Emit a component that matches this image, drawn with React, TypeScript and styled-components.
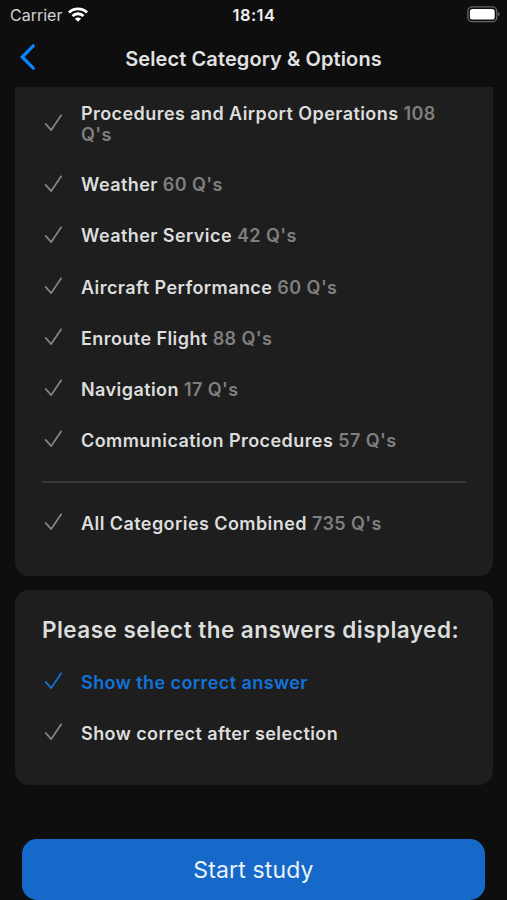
import React from 'react';
import styled, { createGlobalStyle } from 'styled-components';

const GlobalStyle = createGlobalStyle`
  * { box-sizing: border-box; }
  body { margin: 0; background: #0e0e0e; overflow: hidden; }
`;

const Screen = styled.main`
  width: 507px;
  height: 900px;
  display: flex;
  flex-direction: column;
  overflow: hidden;
  background: #0e0e0e;
  color: #dcdddd;
  font-family: Inter, sans-serif;
`;

const StatusBar = styled.div`
  height: 30px;
  flex: none;
  display: grid;
  grid-template-columns: 1fr auto 1fr;
  align-items: center;
  padding: 0 7px 0 10px;
`;

const Carrier = styled.div`
  display: flex;
  align-items: center;
  gap: 6px;
  font-size: 16px;
  letter-spacing: 0;
  color: #d2d2d2;
  svg { margin-top: -2px; }
`;

const Clock = styled.div`
  font-size: 16.5px;
  font-weight: 600;
  letter-spacing: 0.4px;
  margin-right: 2px;
  color: #f0f0f0;
`;

const Battery = styled.svg`
  justify-self: end;
  margin-top: -2px;
`;

const Header = styled.header`
  height: 57px;
  flex: none;
  display: grid;
  grid-template-columns: 48px 1fr 48px;
  align-items: center;
`;

const BackButton = styled.button`
  display: flex;
  padding: 0 0 4px 18px;
  border: 0;
  background: none;
`;

const Title = styled.h1`
  margin: 0;
  text-align: center;
  font-size: 20px;
  line-height: 24px;
  font-weight: 600;
  letter-spacing: 0.1px;
  color: #e2e2e2;
`;

const Card = styled.section<{ $continued?: boolean }>`
  flex: none;
  height: ${(p) => (p.$continued ? 489 : 195)}px;
  margin: 0 14px 14px 15px;
  padding: 0 27px;
  border-radius: ${(p) => (p.$continued ? '0 0 14px 14px' : '14px')};
  background: #1e1e1e;
`;

const CardTitle = styled.h2`
  margin: 0;
  padding: 26px 0 13px;
  font-size: 22.5px;
  line-height: 28px;
  font-weight: 600;
  letter-spacing: 0.46px;
  white-space: nowrap;
`;

const Option = styled.div<{ $selected?: boolean; $tall?: boolean }>`
  height: ${(p) => (p.$tall ? 72.6 : 51.1)}px;
  display: flex;
  align-items: center;
  padding-left: 2px;
  padding-top: ${(p) => (p.$tall ? 1.6 : 0)}px;
  color: ${(p) => (p.$selected ? '#1273d8' : '#dcdddd')};
`;

const CheckIcon = styled.svg<{ $selected?: boolean }>`
  flex: none;
  width: 20px;
  height: 20px;
  margin: -3px 17px 0 0;
  fill: none;
  stroke: ${(p) => (p.$selected ? '#1273d8' : '#858585')};
  stroke-width: 1.7;
  stroke-linecap: round;
  stroke-linejoin: round;
`;

const Label = styled.span`
  width: 370px;
  font-size: 18px;
  line-height: 21.5px;
  font-weight: 600;
  letter-spacing: 0.43px;
`;

const Count = styled.span`
  color: #7f7f80;
`;

const Divider = styled.hr`
  height: 2px;
  margin: 14.6px 0 15.7px;
  border: 0;
  background: #363636;
`;

const StartButton = styled.button`
  flex: none;
  height: 61px;
  margin: 40px 22px 0;
  padding: 0;
  border: 0;
  border-radius: 15px;
  background: #1669c9;
  color: #eaf2fb;
  font-family: inherit;
  font-size: 23px;
  line-height: 28px;
  letter-spacing: 0.15px;
`;

const categories = [
  { name: 'Procedures and Airport Operations', count: 108 },
  { name: 'Weather', count: 60 },
  { name: 'Weather Service', count: 42 },
  { name: 'Aircraft Performance', count: 60 },
  { name: 'Enroute Flight', count: 88 },
  { name: 'Navigation', count: 17 },
  { name: 'Communication Procedures', count: 57 },
];

function Check({ selected }: { selected?: boolean }) {
  return (
    <CheckIcon $selected={selected} viewBox="0 0 20 20">
      <path d="M1.6 10.9 7.2 17.1 17.2 2.3" />
    </CheckIcon>
  );
}

function Category({ name, count, tall }: { name: string; count: number; tall?: boolean }) {
  return (
    <Option $tall={tall}>
      <Check />
      <Label>
        {name} <Count>{count} Q's</Count>
      </Label>
    </Option>
  );
}

export default function App() {
  return (
    <Screen>
      <GlobalStyle />
      <StatusBar>
        <Carrier>
          Carrier
          <svg width="20" height="15" viewBox="0 0 20 15" fill="none" stroke="#fff" strokeWidth="2.8">
            <path d="M1 5.5a12.8 12.8 0 0 1 18 0" />
            <path d="M4.5 9a7.9 7.9 0 0 1 11 0" />
            <path d="M10 14.8 6.9 11.7a4.4 4.4 0 0 1 6.2 0Z" fill="#fff" stroke="none" />
          </svg>
        </Carrier>
        <Clock>18:14</Clock>
        <Battery width="33" height="17" viewBox="0 0 33 17">
          <rect x="0.9" y="0.9" width="28.8" height="14.8" rx="4.3" fill="none" stroke="#666" strokeWidth="1.3" />
          <rect x="2.9" y="3.1" width="24.8" height="10.4" rx="2.6" fill="#fff" />
          <path d="M31.2 6.1c1.8.7 1.8 3.6 0 4.3Z" fill="#777" />
        </Battery>
      </StatusBar>
      <Header>
        <BackButton aria-label="Back">
          <svg width="18" height="28" viewBox="0 0 18 28" fill="none" stroke="#0a84ff" strokeWidth="3.2" strokeLinecap="round" strokeLinejoin="miter">
            <path d="M15.3 2.8 4.2 14 15.3 25.2" />
          </svg>
        </BackButton>
        <Title>Select Category &amp; Options</Title>
      </Header>
      <Card $continued>
        {categories.map((c, i) => (
          <Category key={c.name} {...c} tall={i === 0} />
        ))}
        <Divider />
        <Category name="All Categories Combined" count={735} />
      </Card>
      <Card>
        <CardTitle>Please select the answers displayed:</CardTitle>
        <Option $selected>
          <Check selected />
          <Label>Show the correct answer</Label>
        </Option>
        <Option>
          <Check />
          <Label>Show correct after selection</Label>
        </Option>
      </Card>
      <StartButton>Start study</StartButton>
    </Screen>
  );
}
